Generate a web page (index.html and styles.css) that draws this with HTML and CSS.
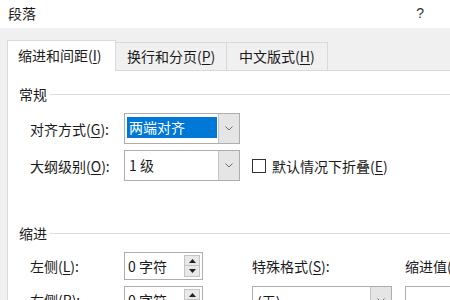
FILE: index.html
```html
<!DOCTYPE html>
<html lang="zh-CN">
<head>
<meta charset="utf-8">
<title>段落</title>
<link rel="stylesheet" href="styles.css">
</head>
<body>
<div class="titlebar"><span class="title">段落</span><span class="help">?</span></div>
<div class="frame">
  <div class="tabs">
    <div class="tab active t1">缩进和间距(<u>I</u>)</div>
    <div class="tab t2">换行和分页(<u>P</u>)</div>
    <div class="tab t3">中文版式(<u>H</u>)</div>
    <div class="tabfill"></div>
  </div>
  <div class="panel">
    <div class="group g1"><span>常规</span><i class="rule"></i></div>
    <div class="general">
      <span class="lbl">对齐方式(<u>G</u>):</span>
      <div class="combo">
        <div class="val"><span class="sel">两端对齐</span></div>
        <div class="drop"><svg width="8" height="5" viewBox="0 0 8 5"><path d="M0.5 0.5 L4 4 L7.5 0.5" fill="none" stroke="#6d6d6d" stroke-width="1"/></svg></div>
      </div>
      <span></span>
      <span class="lbl">大纲级别(<u>O</u>):</span>
      <div class="combo">
        <div class="val"><span class="plain">1 级</span></div>
        <div class="drop"><svg width="8" height="5" viewBox="0 0 8 5"><path d="M0.5 0.5 L4 4 L7.5 0.5" fill="none" stroke="#6d6d6d" stroke-width="1"/></svg></div>
      </div>
      <div class="check"><span class="box"></span><span>默认情况下折叠(<u>E</u>)</span></div>
    </div>
    <div class="group g2"><span>缩进</span><i class="rule"></i></div>
    <div class="indent">
      <span class="lbl">左侧(<u>L</u>):</span>
      <div class="cell">
        <div class="spin">
          <span class="num">0 字符</span>
          <div class="arrows">
            <span class="btn"><svg width="7" height="4" viewBox="0 0 7 4"><path d="M0 4 L3.5 0 L7 4 Z" fill="#222"/></svg></span>
            <span class="btn"><svg width="7" height="4" viewBox="0 0 7 4"><path d="M0 0 L3.5 4 L7 0 Z" fill="#222"/></svg></span>
          </div>
        </div>
      </div>
      <span class="lbl">特殊格式(<u>S</u>):</span>
      <span class="lbl nowrap">缩进值(<u>Y</u>):</span>

      <span class="lbl">右侧(<u>R</u>):</span>
      <div class="cell">
        <div class="spin">
          <span class="num">0 字符</span>
          <div class="arrows">
            <span class="btn"><svg width="7" height="4" viewBox="0 0 7 4"><path d="M0 4 L3.5 0 L7 4 Z" fill="#222"/></svg></span>
            <span class="btn"><svg width="7" height="4" viewBox="0 0 7 4"><path d="M0 0 L3.5 4 L7 0 Z" fill="#222"/></svg></span>
          </div>
        </div>
      </div>
      <div class="cell">
        <div class="combo wide">
          <div class="val"><span class="plain">(无)</span></div>
          <div class="drop"><svg width="8" height="5" viewBox="0 0 8 5"><path d="M0.5 0.5 L4 4 L7.5 0.5" fill="none" stroke="#6d6d6d" stroke-width="1"/></svg></div>
        </div>
      </div>
      <div class="cell"><div class="field"></div></div>
    </div>
  </div>
</div>
</body>
</html>
```

FILE: styles.css
```css
html, body {
  margin: 0;
  padding: 0;
  background: #ffffff;
  overflow: hidden;
}
body {
  width: 450px;
  height: 300px;
  font-family: "Noto Sans CJK SC", "Noto Sans", sans-serif;
  font-size: 14px;
  color: #1a1a1a;
}
u { text-decoration: underline; text-underline-offset: 2px; text-decoration-thickness: 1px; }

.titlebar {
  height: 28px;
  display: flex;
  align-items: center;
  justify-content: space-between;
  padding: 0 26px 2px 8px;
  box-sizing: border-box;
  background: #ffffff;
}
.title { font-size: 14px; line-height: 20px; }
.help { font-family: "Liberation Sans", sans-serif; font-size: 14px; color: #333; }

.frame {
  background: #f0f0f0;
  padding: 12px 0 0 7px;
  height: 272px;
  box-sizing: border-box;
  display: flex;
  flex-direction: column;
}
.tabs {
  display: flex;
  align-items: flex-end;
  height: 31px;
}
.tab {
  box-sizing: border-box;
  height: 29px;
  border: 1px solid #d9d9d9;
  border-left: none;
  background: #f0f0f0;
  padding-left: 10px;
  line-height: 26px;
  white-space: nowrap;
}
.tab.active {
  height: 31px;
  background: #ffffff;
  border-left: 1px solid #d9d9d9;
  border-bottom: none;
  line-height: 29px;
}
.t1 { width: 109px; }
.t2 { width: 111px; padding-left: 11px; }
.t3 { width: 101px; padding-left: 12px; }
.tabfill {
  flex: 1;
  height: 1px;
  border-bottom: 1px solid #d9d9d9;
}

.panel {
  flex: 1;
  background: #ffffff;
  border-left: 1px solid #d9d9d9;
}

.group {
  display: flex;
  align-items: center;
  padding-left: 11px;
  height: 20px;
  line-height: 20px;
}
.group .rule {
  flex: 1;
  height: 1px;
  background: #dcdcdc;
  margin-left: 3px;
}
.g1 { margin-top: 13px; }
.g2 { margin-top: 42px; }

.general {
  margin-top: 9px;
  padding-left: 22px;
  display: grid;
  grid-template-columns: 94px 116px auto;
  grid-auto-rows: 31px;
  row-gap: 6px;
  align-items: center;
}
.lbl { white-space: nowrap; }

.combo {
  box-sizing: border-box;
  height: 31px;
  border: 1px solid #adadad;
  display: flex;
  background: #ffffff;
}
.combo .val {
  flex: 1;
  padding: 3px 1px 5px 2px;
  display: flex;
}
.combo .sel {
  flex: 1;
  background: #0078d7;
  color: #ffffff;
  padding-left: 2px;
  line-height: 21px;
}
.combo .plain {
  padding-left: 2px;
  line-height: 22px;
}
.combo .drop {
  width: 20px;
  background: #e5e5e5;
  border-left: 1px solid #c4c4c4;
  display: flex;
  align-items: center;
  justify-content: center;
}
.combo.wide { width: 140px; }

.check {
  display: flex;
  align-items: center;
  white-space: nowrap;
  margin-left: 12px;
}
.check .box {
  width: 12px;
  height: 12px;
  border: 1px solid #333;
  background: #fff;
  margin-right: 6px;
}

.indent {
  margin-top: 9px;
  padding-left: 22px;
  display: grid;
  grid-template-columns: 94px 128px 153px 1fr;
  grid-auto-rows: 28px;
  row-gap: 6px;
  align-items: center;
}
.cell { height: 28px; }
.spin {
  box-sizing: border-box;
  width: 79px;
  height: 28px;
  border: 1px solid #adadad;
  display: flex;
  align-items: center;
  justify-content: space-between;
  background: #fff;
}
.spin .num { padding-left: 3px; line-height: 20px; }
.arrows {
  display: flex;
  flex-direction: column;
  margin-right: 2px;
}
.btn {
  box-sizing: border-box;
  width: 16px;
  height: 11px;
  background: #e8e8e8;
  border: 1px solid #c4c4c4;
  display: flex;
  align-items: center;
  justify-content: center;
}
.btn + .btn { border-top: none; }
.indent .combo { height: 28px; }
.field {
  box-sizing: border-box;
  height: 28px;
  border: 1px solid #adadad;
  width: 80px;
  background: #fff;
}
.nowrap { white-space: nowrap; }
```
